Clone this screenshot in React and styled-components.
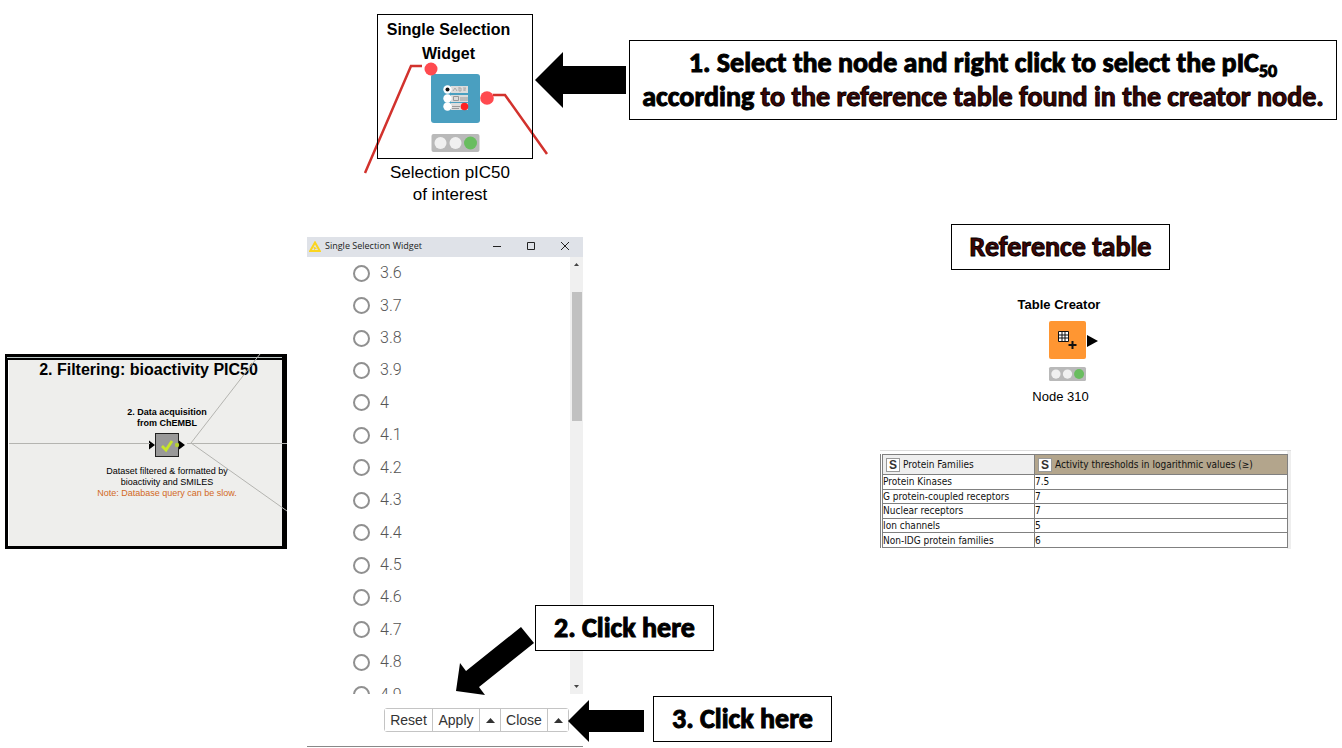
import React from 'react';
import styled, { createGlobalStyle } from 'styled-components';

const GlobalStyle = createGlobalStyle`
  *, *::before, *::after { box-sizing: border-box; }
  body { margin: 0; background: #fff; color: #000; font-family: "Liberation Sans", Arial, sans-serif; }
  h1, h2, h3, p { margin: 0; }
`;

const Page = styled.main`
  display: flex;
  flex-direction: column;
  overflow: hidden;
`;

const StepOne = styled.section`
  display: flex;
  align-items: flex-start;
  height: 224px;
  padding: 14px 5px 0 365px;
`;

const Workspace = styled.section`
  display: flex;
  align-items: flex-start;
  gap: 20px;
  padding-left: 5px;
`;

const Callout = styled.p`
  flex: ${(p) => (p.$grow ? '1 1 0' : '0 0 auto')};
  padding: ${(p) => (p.$grow ? '5px 0' : '5px 18px')};
  border: 1px solid #000;
  background: #fff;
  color: #000;
  font: 700 28px/34px Carlito, Lato, sans-serif;
  text-align: center;
  white-space: nowrap;
  -webkit-text-stroke: 1px #000;

  sub {
    font-size: 18px;
    line-height: 1;
    vertical-align: -5px;
  }
`;

const CalloutSlot = styled.div`
  display: flex;
  flex: 1;
  padding: 26px 0 0 3px;
`;

const Outlined = styled.span`
  color: #420505;
`;

const Arrow = styled.svg`
  display: block;
  flex: none;
  margin-top: ${(p) => p.$drop || 0}px;
`;

/* Selected widget node */
const SelectedNode = styled.figure`
  position: relative;
  flex: none;
  width: 170px;
  margin: 0;
`;

const SelectionFrame = styled.div`
  display: flex;
  flex-direction: column;
  align-items: center;
  width: 156px;
  height: 145px;
  margin-left: 12px;
  padding-top: 3px;
  border: 1px solid #000;
`;

const NodeTitle = styled.h2`
  padding-right: ${(p) => p.$shift || 0}px;
  font-size: ${(p) => p.$size}px;
  line-height: ${(p) => p.$line}px;
  text-align: center;
  white-space: pre-line;
`;

const NodeCaption = styled.figcaption`
  font-size: ${(p) => p.$size}px;
  line-height: ${(p) => p.$line}px;
  text-align: center;
  white-space: pre-line;
  padding-top: ${(p) => p.$gap}px;
`;

const Links = styled.svg`
  position: absolute;
  left: 0;
  top: 0;
  overflow: visible;
  pointer-events: none;
`;

const NodeGlyph = styled.svg`
  display: block;
  margin-top: ${(p) => p.$gap}px;
  overflow: visible;
`;

/* Filtering panel */
const FilterPanel = styled.section`
  position: relative;
  flex: none;
  width: 282px;
  height: 195px;
  margin-top: 130px;
  padding-top: 4px;
  border: solid #000;
  border-width: 3px 5px 3px 2px;
  background: #eeeeec;
  box-shadow: inset 0 1px #b9c4c2, inset 0 3px #000, inset 1px 0 #000, inset 2px 0 #fff;
`;

const FilterTitle = styled.h1`
  font-size: 16px;
  line-height: 18px;
  text-align: center;
  padding-left: 8px;
`;

const MetaNode = styled.figure`
  display: flex;
  flex-direction: column;
  align-items: center;
  margin: 28px 0 0;
  padding-left: 45px;
`;

const Note = styled.span`
  display: block;
  color: #d2691e;
`;

/* Dialog */
const Dialog = styled.section`
  position: relative;
  flex: none;
  width: 276px;
  margin-top: 13px;
  border-bottom: 1px solid #888;
`;

const TitleBar = styled.header`
  display: flex;
  align-items: center;
  height: 20px;
  padding: 0 12px 2px 2px;
  background: #dfe2e8;
`;

const DialogTitle = styled.h2`
  flex: 1;
  margin-left: 4px;
  font: 400 9px/18px "Open Sans", sans-serif;
  color: #222;
`;

const WindowButtons = styled.div`
  display: flex;
  gap: 22px;
`;

const WindowButton = styled.button`
  display: block;
  width: 12px;
  height: 12px;
  padding: 0;
  border: 0;
  background: none;
`;

const DialogBody = styled.div`
  display: flex;
  height: 437px;
  overflow: hidden;
`;

const Options = styled.div`
  flex: 1;
  display: grid;
  grid-auto-rows: 1fr;
  height: 454px;
  padding-left: 46px;
`;

const Option = styled.label`
  display: flex;
  align-items: center;
  gap: 10px;
  font: 300 16px/20px Roboto, sans-serif;
  color: #555;
`;

const Radio = styled.input.attrs({ type: 'radio' })`
  appearance: none;
  width: 17px;
  height: 17px;
  margin: 0;
  border: 2px solid #909090;
  border-radius: 50%;
  background: #fff;

  &:checked { background: radial-gradient(#555 40%, #fff 45%); }
`;

const ScrollBar = styled.div`
  display: flex;
  flex-direction: column;
  align-items: center;
  width: 13px;
  background: #f0f0f0;
`;

const ScrollThumb = styled.div`
  width: 10px;
  height: 129px;
  margin: 20px 0 auto 1px;
  background: #c1c1c1;
`;

const ScrollArrow = styled.svg`
  display: block;
  margin: 6px 0 5px;
`;

const DialogFooter = styled.footer`
  display: flex;
  justify-content: flex-end;
  height: 52px;
  padding: 14px 14px 14px 0;
`;

const ButtonGroup = styled.div`
  display: flex;
  border: 1px solid #c4c4c4;
  border-radius: 3px;
`;

const FooterButton = styled.button`
  display: flex;
  align-items: center;
  justify-content: center;
  width: ${(p) => (p.$caret ? 21 : 47)}px;
  padding: 0;
  border: 0;
  border-left: ${(p) => (p.$first ? '0' : '1px solid #c4c4c4')};
  background: #fff;
  color: #333;
  font: 400 14px/20px "Liberation Sans", Arial, sans-serif;
`;

const StepTwo = styled.div`
  position: absolute;
  left: 149px;
  top: 368px;
  display: flex;
  align-items: flex-start;
`;

const StepThree = styled.div`
  position: absolute;
  left: 261px;
  top: 459px;
  display: flex;
  align-items: flex-start;
  gap: 9px;
`;

/* Reference table */
const Reference = styled.section`
  width: 411px;
  margin: 0 51px 0 auto;
`;

const ReferenceHead = styled.div`
  display: flex;
  flex-direction: column;
  align-items: center;
  padding-right: 50px;
`;

const CreatorNode = styled.figure`
  display: flex;
  flex-direction: column;
  align-items: center;
  margin: 26px 0 45px;
`;

const NodeBody = styled.div`
  padding-left: 13px;
`;

const TableFrame = styled.div`
  padding: 3px 3px 1px 0;
  border-top: 1px solid #ddd;
  background: linear-gradient(90deg, #fff 0 407px, #eee 407px);
`;

const DataTable = styled.table`
  width: 100%;
  height: 94px;
  table-layout: fixed;
  border-collapse: collapse;
  border: 1px solid #808080;
  border-left: 3px double #808080;
  font: 400 10px/13px "DejaVu Sans Condensed", "Noto Sans", sans-serif;
  color: #111;

  td {
    height: 14px;
    padding: 0;
    border: 1px solid #808080;
    background: #fff;
  }
`;

const HeadCell = styled.th`
  width: ${(p) => (p.$wide ? 'auto' : '153px')};
  height: 20px;
  padding: 0 0 0 3px;
  border: 1px solid #808080;
  background: ${(p) => (p.$wide ? '#b3a58c' : '#efefef')};
  font-weight: 400;
  text-align: left;
`;

const HeadLabel = styled.span`
  display: flex;
  align-items: center;
  gap: 3px;
`;

const TypeBadge = styled.span`
  width: 14px;
  height: 14px;
  border: 1px solid #999;
  background: #fff;
  color: #333;
  font: 700 12px/13px "Liberation Sans", Arial, sans-serif;
  text-align: center;
`;

const values = ['3.6', '3.7', '3.8', '3.9', '4', '4.1', '4.2', '4.3', '4.4', '4.5', '4.6', '4.7', '4.8', '4.9'];

const families = [
  ['Protein Kinases', '7.5'],
  ['G protein-coupled receptors', '7'],
  ['Nuclear receptors', '7'],
  ['Ion channels', '5'],
  ['Non-IDG protein families', '6'],
];

function LeftArrow({ width, height, head, inset, drop }) {
  return (
    <Arrow width={width} height={height} $drop={drop} aria-hidden="true">
      <polygon
        points={`0,${height / 2} ${head},0 ${head},${inset} ${width},${inset} ${width},${height - inset} ${head},${height - inset} ${head},${height}`}
      />
    </Arrow>
  );
}

function StatusLight({ width, height, gap }) {
  return (
    <NodeGlyph $gap={gap} width={width} height={height} viewBox="0 0 48 18" aria-hidden="true">
      <rect width="48" height="18" rx="2" fill="#b9b9b9" />
      <circle cx="9" cy="9" r="6" fill="#f0f0f0" />
      <circle cx="24" cy="9" r="6" fill="#f0f0f0" />
      <circle cx="39" cy="9" r="6.5" fill="#69bd5f" />
    </NodeGlyph>
  );
}

function Caret() {
  return (
    <svg width="9" height="5" aria-hidden="true">
      <path d="M0 5L4.500 0L9 5z" fill="#333" />
    </svg>
  );
}

export default function App() {
  return (
    <>
      <GlobalStyle />
      <Page>
        <StepOne>
          <SelectedNode>
            <SelectionFrame>
              <NodeTitle $size={16} $line={24} $shift={13}>{'Single Selection\nWidget'}</NodeTitle>
              <NodeGlyph $gap={8} width="49" height="49" aria-hidden="true">
                <rect width="49" height="49" rx="3" fill="#4a9fc0" />
                <rect x="20" y="12" width="17" height="7" fill="#dcdcdc" />
                <path d="M22 17l2-3 2 3M28 13v4h2v-3h-2M33 13v4M35 14h-1v3" stroke="#aaa" fill="none" />
                <rect x="20" y="21" width="17" height="7" fill="#dcdcdc" />
                <path d="M22.500 22.500h5v4h-5zM30 23v4M32 23v4M34 23v4M36 23v4" stroke="#999" fill="none" />
                <rect x="20" y="29" width="17" height="7" fill="#dcdcdc" />
                <path d="M21 32.500h8M21 34.500h7" stroke="#999" />
                <circle cx="16.500" cy="15.500" r="4.200" fill="#fff" />
                <circle cx="16.500" cy="15.500" r="2" fill="#111" />
                <circle cx="16.500" cy="24.500" r="4.200" fill="#fff" />
                <circle cx="16.500" cy="32.500" r="4.200" fill="#fff" />
                <circle cx="33.500" cy="32.500" r="3.800" fill="#f22" />
              </NodeGlyph>
              <StatusLight gap={11} width={49} height={18} />
            </SelectionFrame>
            <NodeCaption $size={17} $line={22} $gap={3}>{'Selection pIC50\nof interest'}</NodeCaption>
            <Links width="183" height="165" aria-hidden="true">
              <path d="M0 159L46 52H57M128 81H140L182 140" fill="none" stroke="#d2322d" strokeWidth="2.500" />
              <circle cx="66" cy="55" r="6.500" fill="#ff4a4f" />
              <circle cx="122" cy="84" r="6.800" fill="#ff4a4f" />
              <path d="M12.500 115V145M167.500 105V145" stroke="#000" />
            </Links>
          </SelectedNode>
          <LeftArrow width={91} height={56} head={28} inset={14} drop={38} />
          <CalloutSlot>
            <Callout $grow>
              1. Select the node and right click to select the pIC<sub>50</sub>
              <br />
              according <Outlined>to the reference table found in the creator node.</Outlined>
            </Callout>
          </CalloutSlot>
        </StepOne>

        <Workspace>
          <FilterPanel>
            <FilterTitle>2. Filtering: bioactivity PIC50</FilterTitle>
            <MetaNode>
              <NodeTitle $size={9} $line={11}>{'2. Data acquisition\nfrom ChEMBL'}</NodeTitle>
              <NodeGlyph $gap={4} width="38" height="24" aria-hidden="true">
                <rect x="7.500" y="0.500" width="23" height="23" fill="#999" stroke="#222" />
                <path d="M1 7.500v9l6-4.500zM31 7.500v9l6-4.500z" />
                <path d="M14 13l4 4 6-9" fill="none" stroke="#c8e628" strokeWidth="2.800" />
                <circle cx="29" cy="12" r="2.200" fill="#b5cf35" />
              </NodeGlyph>
              <NodeCaption $size={9} $line={11} $gap={9}>
                {'Dataset filtered & formatted by\nbioactivity and SMILES'}
                <Note>Note: Database query can be slow.</Note>
              </NodeCaption>
            </MetaNode>
            <Links width="280" height="190" aria-hidden="true">
              <path d="M2 86.500H143M180 86.500H280M184 86L253 -3M184 86L280 154" fill="none" stroke="#b4b4b0" />
            </Links>
          </FilterPanel>

          <Dialog>
            <TitleBar>
              <svg width="12" height="11" viewBox="0 0 12 11" aria-hidden="true">
                <path d="M6 1.500L10.800 10H1.200z" fill="none" stroke="#fbd51f" strokeWidth="2" />
                <path d="M4.500 5.500L8 7.300 5 9z" fill="#fbd51f" />
              </svg>
              <DialogTitle>Single Selection Widget</DialogTitle>
              <WindowButtons>
                <WindowButton aria-label="Minimize">
                  <svg width="12" height="12"><path d="M2 6.500H10" stroke="#222" /></svg>
                </WindowButton>
                <WindowButton aria-label="Maximize">
                  <svg width="12" height="12"><path d="M2.500 2.500H9.500V9.500H2.500z" stroke="#222" fill="none" /></svg>
                </WindowButton>
                <WindowButton aria-label="Close window">
                  <svg width="12" height="12"><path d="M2 2L10 10M10 2L2 10" stroke="#222" /></svg>
                </WindowButton>
              </WindowButtons>
            </TitleBar>
            <DialogBody>
              <Options role="radiogroup" aria-label="pIC50">
                {values.map((v) => (
                  <Option key={v}>
                    <Radio name="pic50" value={v} />
                    {v}
                  </Option>
                ))}
              </Options>
              <ScrollBar aria-hidden="true">
                <ScrollArrow width="5" height="4"><path d="M0 3L2.500 0L5 3z" fill="#444" /></ScrollArrow>
                <ScrollThumb />
                <ScrollArrow width="5" height="4"><path d="M0 0L2.500 3L5 0z" fill="#444" /></ScrollArrow>
              </ScrollBar>
            </DialogBody>
            <DialogFooter>
              <ButtonGroup>
                <FooterButton $first>Reset</FooterButton>
                <FooterButton>Apply</FooterButton>
                <FooterButton $caret aria-label="Apply options"><Caret /></FooterButton>
                <FooterButton>Close</FooterButton>
                <FooterButton $caret aria-label="Close options"><Caret /></FooterButton>
              </ButtonGroup>
            </DialogFooter>
            <StepTwo>
              <Arrow width="79" height="69" $drop={22} aria-hidden="true">
                <polygon points="65,0 78,16 23,60 29,68 0,64 4,36 10,44" />
              </Arrow>
              <Callout>2. Click here</Callout>
            </StepTwo>
            <StepThree>
              <LeftArrow width={76} height={42} head={21} inset={10} drop={4} />
              <Callout>3. Click here</Callout>
            </StepThree>
          </Dialog>

          <Reference>
            <ReferenceHead>
              <Callout><Outlined>Reference table</Outlined></Callout>
              <CreatorNode>
                <NodeTitle $size={13} $line={18} $shift={3}>Table Creator</NodeTitle>
                <NodeBody>
                  <NodeGlyph $gap={7} width="37" height="38" aria-hidden="true">
                    <rect width="37" height="38" rx="2" fill="#ff9632" />
                    <path d="M9.500 10.500h10v10h-10z" fill="#fff" />
                    <path d="M9.500 10.500h10v10h-10zM13 10v11M16 10v11M9 14h11M9 17h11" fill="none" stroke="#111" />
                    <path d="M23.500 20v8M19.500 24h8" stroke="#111" strokeWidth="2" />
                    <path d="M38 14v12l11-6z" />
                  </NodeGlyph>
                  <StatusLight gap={8} width={37} height={14} />
                </NodeBody>
                <NodeCaption $size={13} $line={16} $gap={8}>Node 310</NodeCaption>
              </CreatorNode>
            </ReferenceHead>
            <TableFrame>
              <DataTable>
                <thead>
                  <tr>
                    <HeadCell><HeadLabel><TypeBadge>S</TypeBadge>Protein Families</HeadLabel></HeadCell>
                    <HeadCell $wide><HeadLabel><TypeBadge>S</TypeBadge>Activity thresholds in logarithmic values (≥)</HeadLabel></HeadCell>
                  </tr>
                </thead>
                <tbody>
                  {families.map(([name, threshold]) => (
                    <tr key={name}>
                      <td>{name}</td>
                      <td>{threshold}</td>
                    </tr>
                  ))}
                </tbody>
              </DataTable>
            </TableFrame>
          </Reference>
        </Workspace>
      </Page>
    </>
  );
}
